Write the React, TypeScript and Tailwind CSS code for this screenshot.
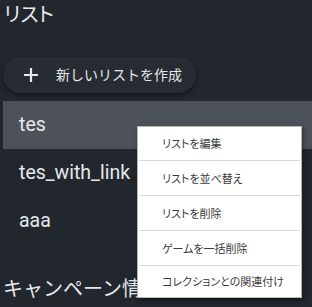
import React from "react";

const items = [
  { label: "リストを編集", h: "h-[33px]" },
  { label: "リストを並べ替え", h: "h-[34px]" },
  { label: "リストを削除", h: "h-[34px]" },
  { label: "ゲームを一括削除", h: "h-[34px]" },
  { label: "コレクションとの関連付け", h: "h-[31px]" },
];

export default function App() {
  return (
    <div className="relative w-[312px] h-[307px] overflow-hidden bg-[#22272e] text-[#e6e8eb] font-['Roboto','Noto_Sans_CJK_JP',sans-serif]">
      <h1 className="pl-[4px] pt-[1px] text-[20px] leading-[28px] [font-feature-settings:'palt']">リスト</h1>
      <div className="mt-[28px] pl-[3px]">
        <button className="flex h-[36px] w-[193px] items-center gap-[17px] rounded-full bg-[#272c33] pl-[20px] text-[14px] text-[#e6e8eb] shadow-[0_2px_4px_rgba(0,0,0,0.45)]">
          <svg width="16" height="16" viewBox="0 0 16 16">
            <path d="M8 1v14M1 8h14" stroke="#e6e8eb" strokeWidth="2.2" />
          </svg>
          <span>新しいリストを作成</span>
        </button>
      </div>
      <div className="mt-[8px] pl-[3px]">
        <div className="flex h-[48px] items-center bg-[#4d525a] pl-[16px] text-[19.5px]">tes</div>
        <div className="flex h-[48px] items-center pl-[16px] text-[19.5px]">tes_with_link</div>
        <div className="flex h-[48px] items-center pl-[16px] text-[19.5px]">aaa</div>
      </div>
      <h2 className="mt-[30px] pl-[3px] text-[20px] leading-[28px]">キャンペーン情報</h2>

      <div className="absolute left-[137px] top-[126px] w-[165px] border border-[#b8b8b8] bg-white shadow-[1px_2px_4px_rgba(0,0,0,0.5)]">
        {items.map((it, i) => (
          <div key={it.label}>
            {i > 0 && <div className="mx-[1px] h-px bg-[#d9d9d9]" />}
            <div className={`${it.h} flex items-center pl-[24px] text-[11px] text-[#3a3a3a] [font-feature-settings:'palt'] font-['Noto_Sans_CJK_JP',sans-serif]`}>
              {it.label}
            </div>
          </div>
        ))}
      </div>
    </div>
  );
}
